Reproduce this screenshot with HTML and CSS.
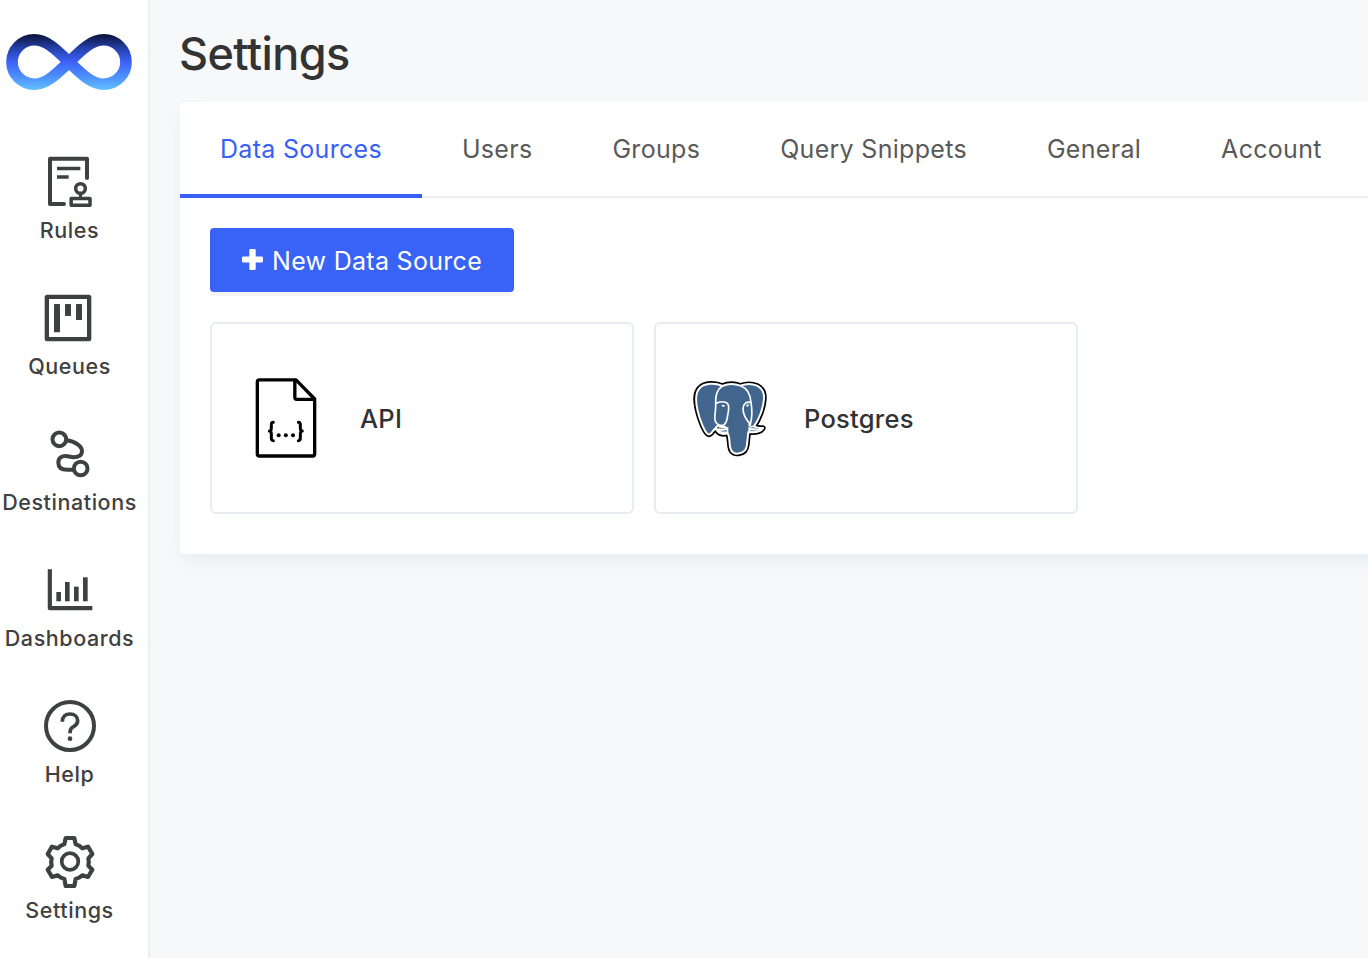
FILE: index.html
```html
<!DOCTYPE html>
<html lang="en">
<head>
<meta charset="utf-8">
<title>Settings</title>
<link rel="stylesheet" href="styles.css">
</head>
<body>
<div class="app">
  <aside class="sidebar">
    <a class="logo">
      <svg viewBox="18 41.500 378 169" width="126" height="56" preserveAspectRatio="none">
        <defs><linearGradient id="loop" gradientUnits="userSpaceOnUse" x1="0" y1="42" x2="0" y2="210">
          <stop offset="0" stop-color="#0b1238"/><stop offset=".25" stop-color="#2440a8"/><stop offset=".5" stop-color="#3d62fb"/><stop offset=".75" stop-color="#4c8dfb"/><stop offset="1" stop-color="#62c0ff"/>
        </linearGradient></defs>
        <path d="M207 126C170 90 140 59 103 59C66 59 36 89 36 126C36 163 66 193 103 193C140 193 170 162 207 126C244 90 274 59 311 59C348 59 378 89 378 126C378 163 348 193 311 193C274 193 244 162 207 126Z" fill="none" stroke="url(#loop)" stroke-width="35"/>
      </svg>
    </a>
    <nav class="menu">
      <a class="item">
        <svg class="icon" viewBox="123 27 168 168">
          <path d="M261 99V41H150V177H192" stroke-linecap="round"/>
          <path d="M171 70.500H241M171 96H206" stroke-width="10.500"/>
          <circle cx="241.500" cy="130.500" r="14.500" stroke-width="10.500"/>
          <path d="M241.500 145V158" stroke-width="9"/>
          <rect x="213.500" y="160.500" width="56.500" height="20.500" stroke-width="10.500"/>
        </svg>
        <span>Rules</span>
      </a>
      <a class="item">
        <svg class="icon" viewBox="123 30 168 168">
          <rect x="140.500" y="50.500" width="127" height="127" rx="1" stroke-width="13"/>
          <g class="solid"><rect x="162" y="72" width="18" height="85" rx="2"/><rect x="195" y="72" width="18" height="36" rx="2"/><rect x="228" y="72" width="18" height="48" rx="2"/></g>
        </svg>
        <span>Queues</span>
      </a>
      <a class="item">
        <svg class="icon" viewBox="123 18 168 168">
          <circle cx="178" cy="58" r="20.500"/>
          <circle cx="242" cy="145.500" r="20.500"/>
          <path d="M199 61C226 64 247 79 246 95C245 109 235 112 220 112L202 108.500C184 107 175 113 175 128C175 143 184 149 202 149H220"/>
        </svg>
        <span>Destinations</span>
      </a>
      <a class="item">
        <svg class="icon" viewBox="123 21 168 168">
          <path d="M149.500 43V159.500H277" stroke-width="12.500"/>
          <g class="solid"><rect x="169" y="111" width="14" height="28"/><rect x="195" y="81" width="14" height="58"/><rect x="222" y="95" width="14" height="44"/><rect x="249" y="67" width="14" height="72"/></g>
        </svg>
        <span>Dashboards</span>
      </a>
      <a class="item">
        <svg class="icon" viewBox="123 24 168 168">
          <circle cx="210" cy="108" r="72" stroke-width="12"/>
          <path d="M187 95C187 80 197 72 210 72C223 72 233 80 233 92C233 105 223 108 216 113C211 117 210 120 210 130" stroke-width="11"/>
          <circle class="solid" cx="210" cy="146" r="7"/>
        </svg>
        <span>Help</span>
      </a>
      <a class="item">
        <svg class="icon" viewBox="123 24 168 168">
          <path d="M197 36H223L227 55Q239 58 247 67L264 62L277 84L265 97Q268 108 265 119L277 131L264 153L247 148Q239 156 227 159L223 180H197L193 159Q181 156 173 148L156 153L143 131L155 119Q152 108 155 97L143 84L156 62L173 67Q181 58 193 55Z" stroke-width="12.500"/>
          <circle cx="210" cy="106.500" r="25" stroke-width="11"/>
        </svg>
        <span>Settings</span>
      </a>
    </nav>
  </aside>
  <main class="content">
    <h1>Settings</h1>
    <section class="panel">
      <nav class="tabs">
        <a class="tab active">Data Sources</a><a class="tab">Users</a><a class="tab">Groups</a><a class="tab">Query Snippets</a><a class="tab">General</a><a class="tab">Account</a>
      </nav>
      <div class="body">
        <button class="create">
          <svg viewBox="0 0 21 21" width="21" height="21"><path d="M8.500 0h4a1.200 1.200 0 0 1 1.200 1.200v6.300h6a1.300 1.300 0 0 1 1.300 1.300v3.400a1.300 1.300 0 0 1-1.300 1.300h-6v6.300a1.200 1.200 0 0 1-1.200 1.200h-4a1.200 1.200 0 0 1-1.200-1.200v-6.300h-6A1.300 1.300 0 0 1 0 12.200V8.800a1.300 1.300 0 0 1 1.300-1.300h6V1.200A1.200 1.200 0 0 1 8.500 0z" fill="#fff"/></svg>
          <span>New Data Source</span>
        </button>
        <div class="sources">
          <a class="source">
            <svg viewBox="0 -6 300 300" width="100" height="100">
              <g fill="none" stroke="#000" stroke-width="10" stroke-linejoin="round" stroke-linecap="round">
                <path d="M70 29.500H180L236 87V252Q236 258 230 258H70Q64 258 64 252V36Q64 29.500 70 29.500Z"/>
                <path d="M176.500 31V82Q176.500 88 182 88H235"/>
                <path d="M112 157Q106 157 106 164V174Q106 183 100 183Q106 183 106 192V205Q106 212 112 212M187 157Q193 157 193 164V174Q193 183 199 183Q193 183 193 192V205Q193 212 187 212" stroke-width="9"/>
              </g>
              <circle cx="128" cy="196" r="6"/><circle cx="149.500" cy="196" r="6"/><circle cx="171" cy="196" r="6"/>
            </svg>
            <span>API</span>
          </a>
          <a class="source">
            <svg viewBox="-15 -6 300 300" width="100" height="100">
              <defs><path id="body" d="M112 48C92 38 59 38 44 54C28 70 32 97 38 123C44 150 58 182 66 190C72 197 78 192 84 183L98 167C105 172 112 172 119 170L124 176C116 179 106 179 94 177C98 190 113 195 128 190C135 202 132 219 136 234C139 249 151 253 163 250C177 248 184 241 186 224L190 186C207 188 227 187 234 174C225 174 215 174 207 169C222 149 236 112 237 86C238 70 232 55 216 47C199 40 180 42 166 47C150 41 128 41 112 48Z"/></defs>
              <use href="#body" fill="#000" stroke="#000" stroke-width="16" stroke-linejoin="round"/>
              <use href="#body" fill="#41658d" stroke="#fff" stroke-width="6" stroke-linejoin="round"/>
              <g fill="none" stroke="#fff" stroke-width="5" stroke-linecap="round" stroke-linejoin="round">
                <path d="M112 48C96 59 91 79 92 98C94 122 86 141 91 154C96 165 108 168 116 165C129 158 126 139 130 125C133 109 131 100 122 97C112 94 101 95 93 101"/>
                <path d="M166 47C185 54 197 73 198 98C202 121 203 137 196 163C183 148 174 134 174 116C174 102 184 94 198 97"/>
                <path d="M112 168Q120 174 128 174M192 163Q192 171 207 169"/>
                <path d="M112 106L119 107L116 110ZM185 106L191 104L188 109Z" stroke-width="3"/>
              </g>
              <path d="M96 179Q111 181 130 173V189Q109 194 96 179ZM190 170Q208 179 233 175Q220 187 190 184Z" fill="#fff"/>
              <path d="M104 182Q115 183 126 179V185Q115 187 104 182ZM196 179Q210 182 222 180Q211 184 196 182Z" fill="#7891ac"/>
            </svg>
            <span>Postgres</span>
          </a>
        </div>
      </div>
    </section>
  </main>
</div>
</body>
</html>
```

FILE: styles.css
```css
* { box-sizing: border-box; }
body { margin: 0; background: #f6f8fa; font-family: Inter, "Liberation Sans", sans-serif; color: #333; overflow: hidden; }
.app { display: flex; height: 958px; overflow: hidden; }
.sidebar { flex: none; width: 150px; padding: 34px 10px 0 0; background: #fff; border-right: 2px solid #edf0f2; }
.logo { display: block; height: 110px; padding-left: 6px; }
.logo svg { display: block; }
.item { display: flex; flex-direction: column; align-items: center; height: 136px; padding-top: 10px; }
.icon { width: 56px; height: 56px; fill: none; stroke: #3f4141; stroke-width: 12; stroke-linejoin: round; }
.solid { fill: #3f4141; stroke: none; }
.item span { margin-top: 6px; padding-left: 1px; font-size: 21.5px; line-height: 28px; font-weight: 500; letter-spacing: .57px; white-space: nowrap; color: #404040; }
.content { flex: none; width: 1300px; padding: 24px 0 0 30px; }
h1 { margin: 0 0 0 -1px; height: 78px; font-size: 45px; line-height: 60px; font-weight: 500; letter-spacing: -0.6px; color: #333; }
.panel { height: 452px; background: #fff; border-radius: 4px; box-shadow: 0 8px 18px -6px rgba(102, 136, 153, .16); }
.tabs { display: flex; height: 96px; border-bottom: 2px solid #edeff0; }
.tab { height: 96px; padding: 0 40px; font-size: 25px; line-height: 95px; letter-spacing: .3px; white-space: nowrap; color: #595959; }
.active { color: #3860f6; border-bottom: 4px solid #3860f6; }
.body { padding: 30px; }
.create { display: flex; align-items: center; gap: 9px; width: 304px; height: 64px; padding: 0 0 0 32px; border: 0; border-radius: 4px; background: #3962f7; box-shadow: 0 4px 0 rgba(0, 0, 0, .045); color: #fff; font-family: inherit; font-size: 25px; letter-spacing: .3px; white-space: nowrap; }
.create svg { flex: none; margin-bottom: 1px; }
.create span { padding-top: 2px; }
.sources { display: flex; gap: 20px; margin-top: 30px; }
.source { display: flex; align-items: center; gap: 24px; width: 424px; height: 192px; padding-left: 24px; border: 2px solid #e8ecf0; border-radius: 6px; font-size: 25.5px; font-weight: 500; letter-spacing: .25px; color: #323232; }
.source svg { flex: none; }
```
